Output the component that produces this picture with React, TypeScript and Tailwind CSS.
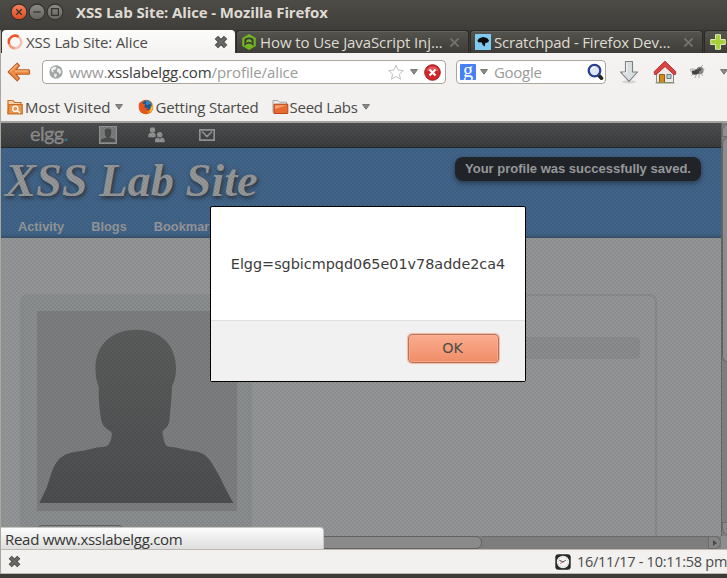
import type { ReactNode } from "react";

const UBUNTU = "font-['Open_Sans','Noto_Sans',sans-serif]";

function Caret({ className = "" }: { className?: string }) {
  return (
    <svg className={`shrink-0 ${className}`} width="8" height="6" viewBox="0 0 8 6">
      <path d="M0.6 0.6H7.4L4 5.2Z" fill="#8b8b88" stroke="#696966" strokeWidth="0.9" />
    </svg>
  );
}

function HeavyX({ size, className = "" }: { size: number; className?: string }) {
  return (
    <svg className={`shrink-0 ${className}`} width={size} height={size} viewBox="0 0 13 13">
      <path d="M2.2 2.2 10.8 10.8M10.8 2.2 2.2 10.8" stroke="#454542" strokeWidth="4.4" />
      <path d="M2.5 2.5 10.5 10.5M10.5 2.5 2.5 10.5" stroke="#686865" strokeWidth="2.6" />
    </svg>
  );
}

function WindowButton({ kind }: { kind: "close" | "min" | "max" }) {
  const glyph =
    kind === "close" ? "M5.6 5.6 10.4 10.4M10.4 5.6 5.6 10.4" : kind === "min" ? "M4.8 8H11.2" : "M5 5H11V11H5Z";
  return (
    <svg width="18" height="18" viewBox="0 0 16 16" className="shrink-0">
      <defs>
        <linearGradient id={`wb-${kind}`} x1="0" y1="0" x2="0" y2="1">
          <stop offset="0" stopColor={kind === "close" ? "#f48360" : "#8d8b84"} />
          <stop offset="1" stopColor={kind === "close" ? "#de4a1c" : "#65635d"} />
        </linearGradient>
      </defs>
      <circle cx="8" cy="8" r="7" fill={`url(#wb-${kind})`} stroke="#32312d" strokeWidth="0.9" />
      <path d={glyph} fill="none" stroke="#35332e" strokeWidth="1.15" />
    </svg>
  );
}

function TitleBar() {
  return (
    <div className="flex h-[30px] shrink-0 items-start bg-linear-to-b from-[#4c4b46] to-[#3f3e3a] pl-[10px]">
      <div className="mt-[3px] flex">
        <WindowButton kind="close" />
        <WindowButton kind="min" />
        <WindowButton kind="max" />
      </div>
      <span className="ml-[12px] mt-[2px] text-[15px] leading-[20px] font-bold tracking-[-0.12px] whitespace-nowrap text-[#dfdbd2]">
        XSS Lab Site: Alice - Mozilla Firefox
      </span>
    </div>
  );
}

function DarkTab({ icon, textClass, children }: { icon: ReactNode; textClass: string; children: ReactNode }) {
  return (
    <div className="ml-[1px] flex h-[23px] w-[233px] shrink-0 items-center rounded-t-[4px] border border-b-0 border-[#2b2a27] bg-linear-to-b from-[#55544e] to-[#3d3c38] pl-[4px] shadow-[inset_0_1px_0_#66645e]">
      {icon}
      <span className={`${textClass} ml-[3px] text-[15px] leading-[20px] whitespace-nowrap text-[#dfdbd2]`}>{children}</span>
      <svg className="mr-[8px] ml-auto shrink-0" width="11" height="11" viewBox="0 0 12 12">
        <path d="M1.5 1.5 10.5 10.5M10.5 1.5 1.5 10.5" stroke="#75736d" strokeWidth="2" />
      </svg>
    </div>
  );
}

function TabStrip() {
  return (
    <div className="flex h-[23px] shrink-0 bg-[#3a3935] pl-[1px]">
      <div className="flex h-[23px] w-[233px] shrink-0 items-center rounded-t-[4px] bg-linear-to-b from-[#fcfcfb] to-[#f4f3f2] pl-[5px]">
        <svg width="16" height="16" viewBox="0 0 16 16" className="shrink-0" fill="none" strokeWidth="2.5">
          <path d="M8 1.8A6.2 6.2 0 0 1 8 14.2" stroke="#f6c0ac" />
          <path d="M8 14.2A6.2 6.2 0 0 1 2.2 10" stroke="#f49a78" />
          <path d="M2.2 10A6.2 6.2 0 0 1 11.5 2.8" stroke="#e8582c" />
        </svg>
        <span className="ml-[3px] text-[15px] leading-[20px] tracking-[-0.15px] whitespace-nowrap text-[#4c4c4a]">XSS Lab Site: Alice</span>
        <HeavyX size={14} className="mr-[7px] ml-auto" />
      </div>
      <DarkTab
        textClass="tracking-[-0.1px]"
        icon={
          <svg width="16" height="16" viewBox="0 0 16 16" className="shrink-0">
            <path d="M8 0 14.8 4V12L8 16 1.2 12V4Z" fill="#72b61f" />
            <path d="M3.4 12V6.3Q3.4 3.5 8 3.5T12.6 6.3V12L10 10Q8 8.9 6 10Z" fill="#3b3b36" />
            <path d="M5.3 7.5Q5.3 5.2 8 5.2T10.7 7.5V9Q8 6.5 5.3 9Z" fill="#79ba2a" />
          </svg>
        }
      >
        How to Use JavaScript Inj…
      </DarkTab>
      <DarkTab
        textClass="tracking-[-0.2px]"
        icon={
          <svg width="16" height="16" viewBox="0 0 16 16" className="shrink-0">
            <rect width="16" height="16" fill="#80c8ee" />
            <path d="M2.5 6.2 4.3 4.2 8 3 12 4 14 6.2 13.2 8.2 10.3 9 9.8 12.5 7.7 10.9 6.8 8.4 3 8.2Z" fill="#0b0b0c" />
          </svg>
        }
      >
        Scratchpad - Firefox Dev…
      </DarkTab>
      <div className="ml-[1px] flex h-[23px] w-[40px] shrink-0 items-center rounded-tl-[4px] border border-b-0 border-[#2b2a27] bg-linear-to-b from-[#55544e] to-[#3d3c38] pl-[5px]">
        <svg width="16" height="16" viewBox="0 0 16 16">
          <path d="M5.5 0.7H10.5V5.5H15.3V10.5H10.5V15.3H5.5V10.5H0.7V5.5H5.5Z" fill="#a6cf3c" stroke="#dcebb0" strokeWidth="1" />
        </svg>
      </div>
    </div>
  );
}

function NavBar() {
  return (
    <div className="flex h-[38px] shrink-0 items-center bg-linear-to-b from-[#f4f3f2] to-[#f2f1ef] pl-[6px]">
      <svg width="24" height="20" viewBox="0 0 24 20" className="shrink-0">
        <path
          d="M10.2 1.2 1.2 10 10.2 18.8 12.5 16.3 8.8 12.2H21.5Q22.6 12.2 22.6 10.9V9.1Q22.6 7.8 21.5 7.8H8.8L12.5 3.7Z"
          fill="#ec8d45"
          stroke="#bf5b22"
          strokeWidth="1.1"
          strokeLinejoin="round"
        />
        <path d="M3 9.6 10.1 2.8M8 9H21" stroke="#f9bf88" strokeWidth="1.1" />
      </svg>
      <div className="ml-[11px] flex h-[24px] w-[404px] shrink-0 items-center rounded-[4px] border border-[#aaa79f] bg-white">
        <svg width="14" height="14" viewBox="0 0 14 14" className="ml-[6px] shrink-0">
          <circle cx="7" cy="7" r="6.7" fill="#a3a5a5" />
          <path d="M2 4 5 1.6 7.5 2.3 6.6 4.5 4 5.2 4.8 7 3 7.6ZM8.5 3 11.3 4.2 12.2 7 10.8 9.6 9.5 7.6 7.8 6.5ZM5 8.4 8 9.2 7.2 12 5.6 12.4Z" fill="#eeefef" />
        </svg>
        <span className="ml-[6px] text-[15px] leading-[20px] whitespace-nowrap text-[#9a9a98]">
          <span className="tracking-[-0.15px]">www.</span>
          <span className="tracking-[-0.12px] text-[#3c3c3a]">xsslabelgg.com</span>
          <span className="tracking-[-0.1px]">/profile/alice</span>
        </span>
        <svg width="18" height="17" viewBox="0 0 18 17" className="mr-[5px] ml-auto shrink-0">
          <path d="M9 1.3 11.1 6.1 16.3 6.6 12.4 10.1 13.6 15.3 9 12.5 4.4 15.3 5.6 10.1 1.7 6.6 6.9 6.1Z" fill="#fff" stroke="#c2c2c2" strokeWidth="1" />
        </svg>
        <Caret />
        <svg width="17" height="17" viewBox="0 0 17 17" className="mr-[4px] ml-[6px] shrink-0">
          <circle cx="8.5" cy="8.5" r="7.8" fill="#d2262b" stroke="#a51b20" strokeWidth="1" />
          <path d="M2.2 7.5A6.5 6.5 0 0 1 14.8 7.5Q8 4 2.2 7.5" fill="#e5585a" />
          <path d="M5.5 5.5 11.5 11.5M11.5 5.5 5.5 11.5" stroke="#fff" strokeWidth="2.3" />
        </svg>
      </div>
      <div className="ml-[10px] flex h-[24px] w-[150px] shrink-0 items-center rounded-[4px] border border-[#aaa79f] bg-white">
        <span className="ml-[3px] flex h-[16px] w-[16px] shrink-0 items-center justify-center rounded-[1px] bg-[#4580f4] pb-[5px] font-['Liberation_Serif',serif] text-[20px] leading-[16px] text-white">
          g
        </span>
        <Caret className="ml-[4px]" />
        <span className="ml-[6px] text-[15px] leading-[20px] tracking-[-0.3px] text-[#9a9a98]">Google</span>
        <svg width="17" height="18" viewBox="0 0 17 18" className="mr-[1px] ml-auto shrink-0">
          <path d="M11.5 12 14.5 15.2" stroke="#23241f" strokeWidth="3.6" strokeLinecap="round" />
          <circle cx="7.5" cy="7.6" r="5.8" fill="#dce6f6" stroke="#273f91" strokeWidth="2.3" />
          <path d="M4.5 7A3.2 3.2 0 0 1 8 4.2" stroke="#fff" strokeWidth="1.4" fill="none" />
        </svg>
      </div>
      <svg width="20" height="24" viewBox="0 0 20 24" className="ml-[13px] shrink-0">
        <ellipse cx="10" cy="21.8" rx="7" ry="1.6" fill="#d4d4d1" />
        <path d="M6.5 1.5H13.5V12H18.5L10 21.3 1.5 12H6.5Z" fill="#d9dfe0" stroke="#7d8080" strokeWidth="1.1" strokeLinejoin="round" />
        <path d="M7.7 2.6V13H4.2" stroke="#f7f9f9" strokeWidth="1" fill="none" />
      </svg>
      <svg width="24" height="24" viewBox="0 0 24 24" className="ml-[14px] shrink-0">
        <path d="M3.5 11.5 12 4 20.5 11.5V22.5H3.5Z" fill="#eceae7" stroke="#8a8785" />
        <path d="M1.3 11.5 12 1.2 22.7 11.5V14.2L21 14.7 12 6.5 3 14.7 1.3 14.2Z" fill="#dc4343" stroke="#ad2929" strokeWidth="0.9" />
        <path d="M6.5 22.5V14.5H11.5V22.5" fill="#d18a1c" stroke="#8c5b10" />
        <path d="M13.9 14.5H18V18.5H13.9Z" fill="#b8d0dc" stroke="#6b7b84" />
        <path d="M2.5 23H21.5" stroke="#7f9a65" />
      </svg>
      <svg width="18" height="17" viewBox="0 0 18 17" className="ml-[11px] shrink-0">
        <path d="M2 7H5M3 12 7 8M7 14 9 9M11 14 11 9M15 12 12 8M12 4 15 1M14 5 16.5 5" stroke="#a5a5a3" strokeWidth="0.9" />
        <ellipse cx="12" cy="6.5" rx="3.6" ry="3.8" fill="#878785" />
        <ellipse cx="7.5" cy="8" rx="3.8" ry="2.6" fill="#434342" transform="rotate(-15 7.5 8)" />
        <circle cx="11.7" cy="5.5" r="1.3" fill="#3d3d3c" />
        <ellipse cx="4.5" cy="5.5" rx="3" ry="1.3" fill="#c3c3c1" />
      </svg>
      <Caret className="ml-[14px]" />
    </div>
  );
}

function BookmarksBar() {
  return (
    <div className="flex h-[32px] shrink-0 items-center border-b-2 border-[#a3a19d] bg-[#f2f1ef] pt-[1px] pl-[6px] text-[15px] leading-[20px] text-[#4a4a48]">
      <svg width="16" height="16" viewBox="0 0 16 16" className="mt-[1px] shrink-0">
        <path d="M1 14.5V1.5H6L7.5 3.5H14V5.5" fill="#f7d2ad" stroke="#c96d25" strokeWidth="1.2" />
        <path d="M1 14.8 2 5.5H15.2V14.8Z" fill="#e9954f" stroke="#c96d25" strokeWidth="1.2" />
        <circle cx="8.3" cy="9.7" r="2.6" fill="none" stroke="#fff" strokeWidth="1.3" />
        <path d="M10.3 11.7 13 14" stroke="#fff" strokeWidth="1.4" />
      </svg>
      <span className="ml-[2px] whitespace-nowrap">Most Visited</span>
      <Caret className="ml-[4px]" />
      <svg width="16" height="16" viewBox="0 0 16 16" className="ml-[15px] shrink-0">
        <circle cx="8" cy="8" r="7.3" fill="#e26c14" />
        <circle cx="8.6" cy="6.5" r="5.1" fill="#1d5590" />
        <path d="M8 1.3Q13 2 13.7 6L11 4.7 9.5 6.2 8 5Z" fill="#3187c6" />
        <path d="M1 4.5 2.4 2.7 4.3 4.5 7.3 5 6.2 7.3 7.5 9.2 10.5 8.7Q9.2 12 5.8 10.8L10.3 14.7Q5 16.2 2.2 12.3 0.3 9 1 4.5Z" fill="#e9531a" />
        <path d="M14 4.5Q16 8.2 13.5 12L10 14.3Q13.3 10.5 12.7 7.2L13.8 7.5Z" fill="#f7c431" />
      </svg>
      <span className="ml-[2px] tracking-[-0.2px] whitespace-nowrap">Getting Started</span>
      <svg width="17" height="16" viewBox="0 0 17 16" className="ml-[13px] shrink-0">
        <path d="M1 13.5V1.5H6L7.5 3.2H14.5V6" fill="#eeeded" stroke="#a9a7a4" />
        <path d="M2 5.2H15.8V14.5H2Z" fill="#e66a31" stroke="#b74618" />
        <path d="M3 6.2H14.8L3 10Z" fill="#f4a077" />
      </svg>
      <span className="ml-[1px] tracking-[-0.3px] whitespace-nowrap">Seed Labs</span>
      <Caret className="ml-[4px]" />
    </div>
  );
}

function Topbar() {
  return (
    <div className="flex h-[25px] shrink-0 items-center border-b border-[#242526] bg-linear-to-b from-[#4d4e4f] to-[#3b3c3d] pl-[29px]">
      <span className="flex h-[25px] w-[39px] items-center pb-[4px] font-['Lato',sans-serif] text-[20px] leading-[20px] tracking-[-0.6px] whitespace-nowrap text-[#8c8c8c] [-webkit-text-stroke:0.3px_currentColor]">
        elgg<span className="text-[#2c7f9c]">.</span>
      </span>
      <svg width="18" height="18" viewBox="0 0 18 18" className="ml-[30px] shrink-0">
        <rect x="0.5" y="0.5" width="17" height="17" fill="#7b7c7c" stroke="#929292" />
        <path d="M5.7 4.6Q6 2.5 9 2.5T12.3 4.6L12 9 10.5 11.5 15.5 13 16.5 16H1.5L2.5 13 7.5 11.5 6 9Z" fill="#4b4c4c" />
      </svg>
      <svg width="17" height="16" viewBox="0 0 17 16" className="ml-[31px] shrink-0" fill="#929393">
        <circle cx="4.5" cy="3" r="2.7" />
        <path d="M0.3 10.2V8Q0.5 5.8 4.5 5.8 7 5.8 7.5 7.2V10.2Z" />
        <circle cx="11.7" cy="7.7" r="2.7" />
        <path d="M7 15.2V13Q7.3 10.8 9.5 10.4L11.7 12 14 10.4Q16.5 11 16.6 13V15.2Z" />
      </svg>
      <svg width="16" height="12" viewBox="0 0 16 12" className="ml-[34px] shrink-0" fill="none" stroke="#949595" strokeWidth="1.7">
        <path d="M0.8 0.8H15.2V11.2H0.8ZM3 2.5 8 7.5 13 2.5" />
      </svg>
    </div>
  );
}

function Avatar() {
  return (
    <div className="h-[200px] w-[200px] bg-[#7c7e7f]">
      <svg width="200" height="200" viewBox="0 0 200 200">
        <defs>
          <linearGradient id="bust" x1="0" y1="0" x2="0" y2="1">
            <stop offset="0" stopColor="#5b5d5d" />
            <stop offset="1" stopColor="#4c4e4f" />
          </linearGradient>
        </defs>
        <path
          d="M99.7 18.8C75 18.5 58 34 58.5 58C58.7 68 60 71 61.8 76C61.5 91 62.5 99 64.5 110C67 119 74 118.5 75 122.5C74.5 129 72 135 68.5 135.5C59 136.5 54 138 46.3 139.7C35 141 27 142 20.5 150C15 157 13 167 10 176L2.3 192H196.5C188 178 184 167 179.5 160C173 148 168 141.5 158 140.3C149 139.5 142 136.5 131 135.5C127 134.5 126.5 127 125.5 121.5C126 117 131 119 132.5 109C133.5 98 134.5 89 135 76C137 70 139 67 139 57C139 34 123 18.5 99.7 18.8Z"
          fill="url(#bust)"
        />
      </svg>
    </div>
  );
}

function WebPage() {
  return (
    <div className="relative flex h-[413px] w-[720px] shrink-0 flex-col overflow-hidden bg-[#939596]">
      <Topbar />
      <div className="flex h-[90px] shrink-0 flex-col justify-between border-b border-[#36506c] bg-[#416489] shadow-[inset_0_-3px_3px_-2px_#38536f]">
        <h1 className="pt-[6px] pl-[4px] font-['Liberation_Serif',serif] text-[46.4px] leading-[54px] font-bold whitespace-nowrap text-[#959697] italic [text-shadow:1px_2px_4px_#2a2d31]">
          XSS Lab Site
        </h1>
        <nav className="flex gap-[27px] pb-[2px] pl-[17px] font-['Liberation_Sans',sans-serif] text-[12.8px] leading-[17px] font-bold text-[#959799]">
          <span>Activity</span>
          <span>Blogs</span>
          <span>Bookmarks</span>
        </nav>
      </div>
      <div className="mt-[56px] ml-[19px] flex h-[260px] w-[637px] shrink-0 rounded-t-[8px] border-2 border-[#898c8d] bg-[#939596]">
        <div className="-mt-[2px] -ml-[2px] flex w-[232px] shrink-0 flex-col rounded-tl-[8px] bg-[#8b8e8f] pt-[17px] pl-[17px]">
          <Avatar />
          <div className="mt-[14px] h-[20px] w-[87px] rounded-[5px] border border-[#616364]" />
        </div>
        <div className="mt-[41px] mr-[15px] h-[22px] grow rounded-[4px] bg-[#8a8c8d]" />
      </div>
      <div className="absolute inset-0 bg-[radial-gradient(circle,#00000010_0.8px,transparent_1.1px),radial-gradient(circle,#00000010_0.8px,transparent_1.1px)] bg-[length:4px_4px] bg-[position:0_0,2px_2px]" />
      <div className="absolute top-[34px] left-[454px] flex h-[24px] w-[246px] items-center justify-center rounded-[8px] bg-[#202428] font-['Liberation_Sans',sans-serif] text-[13px] font-bold whitespace-nowrap text-[#96989a] shadow-[0_2px_5px_#26364a]">
        Your profile was successfully saved.
      </div>
    </div>
  );
}

function ScrollBars() {
  return (
    <>
      <div className="absolute top-0 left-[720px] flex h-[413px] w-[16px] flex-col border-l border-[#656565] bg-[#7d7d7d]">
        <div className="h-[14px] rounded-tl-[8px] border border-[#6b6b6b] bg-[#909090] pt-[5px] pl-[4px]">
          <div className="h-0 w-0 border-x-[4px] border-b-[5px] border-x-transparent border-b-[#555]" />
        </div>
        <div className="h-[226px] rounded-l-[7px] border border-[#626262] bg-[#8c8c8c]" />
        <div className="mt-auto h-[14px] rounded-bl-[8px] border border-[#6b6b6b] bg-[#8a8a8a] pt-[5px] pl-[3px]">
          <div className="h-0 w-0 border-x-[4px] border-t-[5px] border-x-transparent border-t-[#505050]" />
        </div>
      </div>
      <div className="flex h-[13px] w-[720px] shrink-0 bg-[#7d7d7d]">
        <div className="w-[481px] rounded-r-[6px] border border-[#616161] bg-[#8a8a8a]" />
        <div className="grow border-t border-[#696969]" />
        <div className="flex w-[13px] items-center justify-center rounded-r-[7px] border border-[#6b6b6b] bg-[#868686]">
          <div className="h-0 w-0 border-y-[3px] border-l-[4px] border-y-transparent border-l-[#4a4a4a]" />
        </div>
      </div>
    </>
  );
}

function AlertDialog() {
  return (
    <div className="absolute top-[83px] left-[209px] flex h-[176px] w-[316px] flex-col overflow-hidden rounded-[2px] border border-black bg-white font-['DejaVu_Sans',sans-serif] text-[14.36px] text-[#3c3c3c]">
      <div className="flex h-[113px] items-center justify-center pt-[2px] whitespace-nowrap">Elgg=sgbicmpqd065e01v78adde2ca4</div>
      <div className="flex grow justify-end border-t border-[#dedede] bg-[#f1f1f1] pt-[13px] pr-[26px]">
        <button className="h-[29px] w-[91px] rounded-[4px] border border-[#b5735a] bg-linear-to-b from-[#fbac8f] to-[#ef8d67] pt-[1px] pr-[2px] text-[#4c4c4c] shadow-[inset_0_0_0_1px_#fbb89f88,0_0_1px_1px_#f3b7a2]">
          OK
        </button>
      </div>
    </div>
  );
}

function ClockIcon() {
  return (
    <svg width="16" height="16" viewBox="0 0 16 16" className="shrink-0">
      <rect x="0.3" y="0.3" width="15.4" height="15.4" rx="3" fill="#292929" />
      <circle cx="8" cy="8" r="6.2" fill="#f4f4f4" />
      <circle cx="8" cy="8" r="5" fill="none" stroke="#999" strokeWidth="0.8" strokeDasharray="0.8 1.8" />
      <path d="M8 8 4.3 6.2M8 8 10.7 6.3" stroke="#333" strokeWidth="0.9" />
      <path d="M8 8 5 9.5" stroke="#d44" strokeWidth="0.7" />
    </svg>
  );
}

export default function App() {
  return (
    <div className={`${UBUNTU} flex h-[578px] w-[727px] flex-col overflow-hidden bg-[#3c3b37]`}>
      <TitleBar />
      <div className="flex h-[544px] shrink-0 flex-col border-l border-[#a9a69e]">
        <TabStrip />
        <NavBar />
        <BookmarksBar />
        <div className="relative flex h-[426px] shrink-0 flex-col overflow-hidden bg-[#8b8d8e]">
          <WebPage />
          <ScrollBars />
          <AlertDialog />
          <div className="absolute bottom-0 left-0 flex h-[22px] w-[323px] items-center rounded-tr-[4px] border-t border-r border-[#c9c7c3] bg-linear-to-b from-[#fcfcfc] to-[#dedede] pl-[4px] text-[15px] leading-[20px] tracking-[-0.28px] text-[#353533]">
            Read www.xsslabelgg.com
          </div>
        </div>
        <div className="flex h-[25px] shrink-0 items-center border-t border-b border-[#bcb9b3] bg-[#f2f1ef] text-[14.5px] leading-[20px] text-[#4a4a48]">
          <HeavyX size={13} className="ml-[7px]" />
          <div className="ml-auto flex w-[172px] items-center gap-[6px]">
            <ClockIcon />
            <span className="tracking-[-0.27px] whitespace-nowrap">16/11/17 - 10:11:58 pm</span>
          </div>
        </div>
      </div>
    </div>
  );
}
